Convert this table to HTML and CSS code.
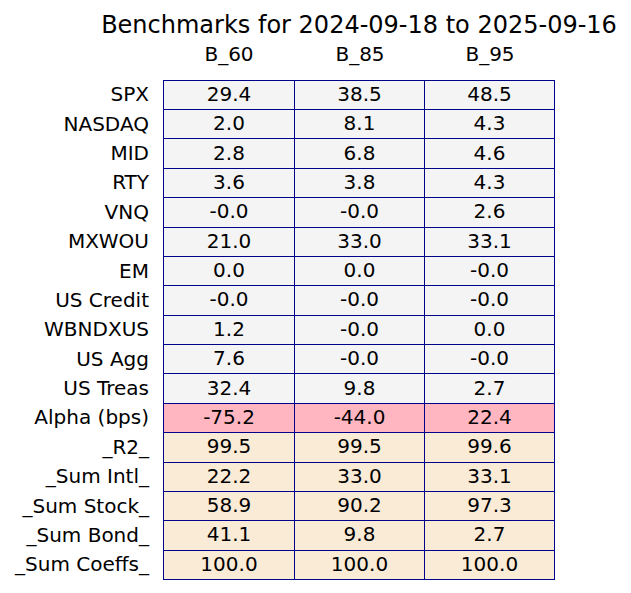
FILE: index.html
```html
<!DOCTYPE html>
<html>
<head>
<meta charset="utf-8">
<link rel="stylesheet" href="styles.css">
</head>
<body>
<div class="figure">
  <div class="top">
    <div class="title"><span>Benchmarks for 2024-09-18 to 2025-09-16</span></div>
  </div>
  <div class="head">
    <div></div>
    <div class="colhead">B_60</div>
    <div class="colhead">B_85</div>
    <div class="colhead">B_95</div>
  </div>
  <div class="table">
    <div class="label">SPX</div><div class="cell grey first-row first-col">29.4</div><div class="cell grey first-row">38.5</div><div class="cell grey first-row">48.5</div>
    <div class="label">NASDAQ</div><div class="cell grey first-col">2.0</div><div class="cell grey">8.1</div><div class="cell grey">4.3</div>
    <div class="label">MID</div><div class="cell grey first-col">2.8</div><div class="cell grey">6.8</div><div class="cell grey">4.6</div>
    <div class="label">RTY</div><div class="cell grey first-col">3.6</div><div class="cell grey">3.8</div><div class="cell grey">4.3</div>
    <div class="label">VNQ</div><div class="cell grey first-col">-0.0</div><div class="cell grey">-0.0</div><div class="cell grey">2.6</div>
    <div class="label">MXWOU</div><div class="cell grey first-col">21.0</div><div class="cell grey">33.0</div><div class="cell grey">33.1</div>
    <div class="label">EM</div><div class="cell grey first-col">0.0</div><div class="cell grey">0.0</div><div class="cell grey">-0.0</div>
    <div class="label">US Credit</div><div class="cell grey first-col">-0.0</div><div class="cell grey">-0.0</div><div class="cell grey">-0.0</div>
    <div class="label">WBNDXUS</div><div class="cell grey first-col">1.2</div><div class="cell grey">-0.0</div><div class="cell grey">0.0</div>
    <div class="label">US Agg</div><div class="cell grey first-col">7.6</div><div class="cell grey">-0.0</div><div class="cell grey">-0.0</div>
    <div class="label">US Treas</div><div class="cell grey first-col">32.4</div><div class="cell grey">9.8</div><div class="cell grey">2.7</div>
    <div class="label">Alpha (bps)</div><div class="cell pink first-col">-75.2</div><div class="cell pink">-44.0</div><div class="cell pink">22.4</div>
    <div class="label">_R2_</div><div class="cell beige first-col">99.5</div><div class="cell beige">99.5</div><div class="cell beige">99.6</div>
    <div class="label">_Sum Intl_</div><div class="cell beige first-col">22.2</div><div class="cell beige">33.0</div><div class="cell beige">33.1</div>
    <div class="label">_Sum Stock_</div><div class="cell beige first-col">58.9</div><div class="cell beige">90.2</div><div class="cell beige">97.3</div>
    <div class="label">_Sum Bond_</div><div class="cell beige first-col">41.1</div><div class="cell beige">9.8</div><div class="cell beige">2.7</div>
    <div class="label">_Sum Coeffs_</div><div class="cell beige first-col">100.0</div><div class="cell beige">100.0</div><div class="cell beige">100.0</div>
  </div>
</div>
</body>
</html>
```
FILE: styles.css
```css
html, body {
  margin: 0;
  padding: 0;
  background: #ffffff;
}
body {
  font-family: "DejaVu Sans", sans-serif;
  color: #000000;
}
.figure {
  width: 631px;
  padding-top: 11px;
}
.top {
  display: grid;
  grid-template-columns: 163px 392px;
}
.title {
  grid-column: 2;
  display: flex;
  justify-content: center;
  font-size: 24px;
  line-height: 28px;
  white-space: nowrap;
}
.head {
  display: grid;
  grid-template-columns: 163px 132px 130px 130px;
  margin-top: 4px;
  font-size: 20px;
  line-height: 23px;
}
.colhead {
  text-align: center;
}
.table {
  display: grid;
  grid-template-columns: 163px 132px 130px 130px;
  grid-template-rows: 30px repeat(16, 29.375px);
  margin-top: 14px;
  font-size: 20px;
}
.label {
  display: flex;
  align-items: center;
  justify-content: flex-end;
  padding-right: 14px;
  padding-bottom: 2px;
  white-space: nowrap;
}
.cell {
  display: flex;
  align-items: center;
  justify-content: center;
  padding-bottom: 2px;
  border-right: 1px solid #00008b;
  border-bottom: 1px solid #00008b;
}
.first-row {
  border-top: 1px solid #00008b;
}
.first-col {
  border-left: 1px solid #00008b;
}
.grey {
  background: #f4f4f4;
}
.pink {
  background: #ffb6c1;
}
.beige {
  background: #faebd7;
}
```
